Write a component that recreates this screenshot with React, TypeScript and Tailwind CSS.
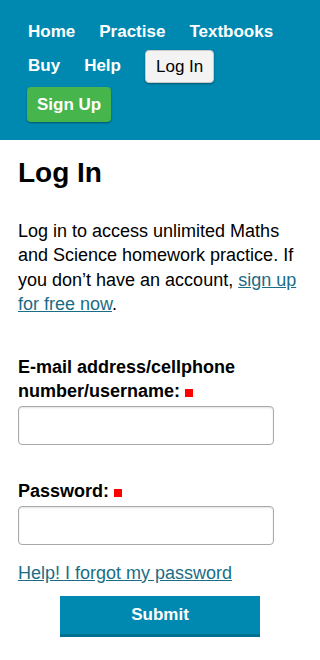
import { useState } from 'react';

const NAV_LINKS = ['Home', 'Practise', 'Textbooks', 'Buy', 'Help'];

function Required() {
  return <span className="ml-[5px] inline-block h-2 w-2 bg-[#ff0000] align-baseline" />;
}

export default function App() {
  const [login, setLogin] = useState('');
  const [password, setPassword] = useState('');

  return (
    <div className="min-h-[660px] bg-white font-['Liberation_Sans',Arial,sans-serif] text-[18px] text-black">
      {/* Top navigation */}
      <header className="bg-[#0089b0] pb-[18px] pl-[28px] pr-3 pt-[15px] text-[17px]">
        <nav className="flex flex-wrap gap-x-6">
          {NAV_LINKS.map((link) => (
            <a key={link} href="#" className="flex h-[34px] items-center font-bold text-white">
              {link}
            </a>
          ))}
          <a
            href="#"
            className="mt-px flex h-[33px] items-center rounded-[4px] border border-[#c9c9c9] bg-[#f3f3f3] px-[10px] text-black shadow-[0_1px_2px_rgba(0,0,0,0.35)]"
          >
            Log In
          </a>
          <a
            href="#"
            className="-ml-px mt-[4px] flex h-[35px] items-center rounded-[4px] bg-[#46b54b] px-[10px] font-bold text-white shadow-[0_1px_2px_rgba(0,0,0,0.4)]"
          >
            Sign Up
          </a>
        </nav>
      </header>

      <main className="px-[18px]">
        <h1 className="mt-[16px] text-[28px] font-bold leading-[33.6px]">Log In</h1>

        <p className="mt-[29px] leading-[24.5px]">
          Log in to access unlimited Maths and Science homework practice. If you don’t have an
          account,{' '}
          <a href="#" className="text-[#1b6d85] underline">
            sign up for free now
          </a>
          .
        </p>

        <form className="mt-[38px]" onSubmit={(e) => e.preventDefault()}>
          <label className="block font-bold leading-[24px]">
            E-mail address/cellphone number/username:
            <Required />
          </label>
          <input
            type="text"
            value={login}
            onChange={(e) => setLogin(e.target.value)}
            className="mt-[3px] block h-[39px] w-[256px] rounded-[4px] border border-[#a9a9a9] bg-white px-2 shadow-[inset_0_1px_2px_rgba(0,0,0,0.12)] outline-none"
          />

          <label className="mt-[34px] block font-bold leading-[24px]">
            Password:
            <Required />
          </label>
          <input
            type="password"
            value={password}
            onChange={(e) => setPassword(e.target.value)}
            className="mt-[3px] block h-[39px] w-[256px] rounded-[4px] border border-[#a9a9a9] bg-white px-2 shadow-[inset_0_1px_2px_rgba(0,0,0,0.12)] outline-none"
          />

          <a href="#" className="mt-[16px] block leading-[24.5px] text-[#1b6d85] underline">
            Help! I forgot my password
          </a>

          <div className="mt-[11px] flex justify-center">
            <button
              type="submit"
              className="h-[41px] w-[200px] border-b-[3px] border-[#00728f] bg-[#0089b0] text-[17px] font-bold text-white"
            >
              Submit
            </button>
          </div>
        </form>
      </main>
    </div>
  );
}
